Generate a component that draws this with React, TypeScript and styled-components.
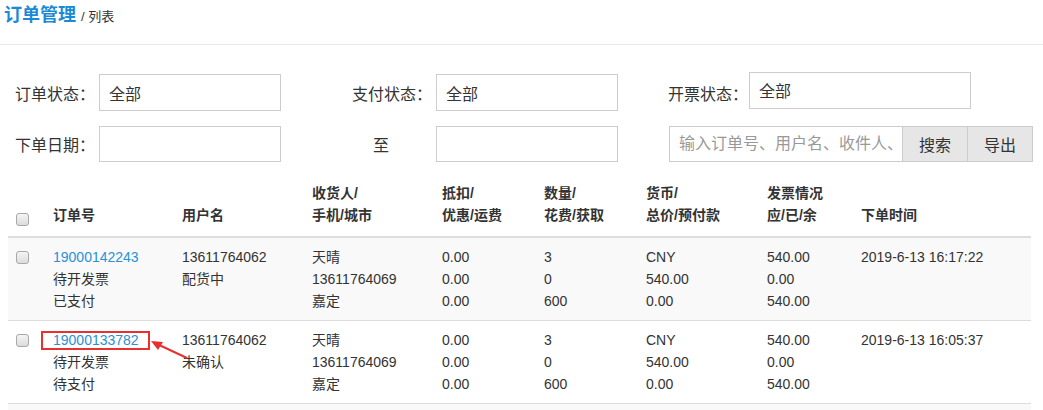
import React from "react";
import styled, { createGlobalStyle } from "styled-components";

const GlobalStyle = createGlobalStyle`
  body {
    margin: 0;
    background: #ffffff;
    color: #333333;
    font-family: "Liberation Sans", "Noto Sans CJK SC", sans-serif;
  }
`;

const Page = styled.div`
  width: 1043px;
  height: 410px;
  overflow: hidden;
`;

const TitleBar = styled.div`
  height: 45px;
  box-sizing: border-box;
  padding: 3px 0 0 4px;
  border-bottom: 1px solid #e9e9e9;
  display: flex;
  align-items: baseline;
  gap: 5px;
`;

const Title = styled.span`
  font-size: 18px;
  font-weight: bold;
  color: #1a8ad6;
  line-height: 24px;
`;

const Crumb = styled.span`
  font-size: 13px;
  color: #333;
`;

const Filters = styled.div`
  padding-top: 29px;
  display: flex;
  flex-direction: column;
  gap: 15px;
`;

const FilterRow = styled.div`
  display: flex;
  align-items: center;
`;

const Label = styled.label<{ $width: number; $pad?: number }>`
  width: ${({ $width }) => $width}px;
  box-sizing: border-box;
  padding-right: ${({ $pad }) => $pad ?? 4}px;
  text-align: right;
  font-size: 16px;
  color: #333;
  white-space: nowrap;
`;

const Field = styled.input<{ $width: number; $height: number; $shift?: number }>`
  width: ${({ $width }) => $width}px;
  height: ${({ $height }) => $height}px;
  box-sizing: border-box;
  border: 1px solid #cccccc;
  padding: 0 9px;
  font-size: 16px;
  font-family: inherit;
  color: #333;
  outline: none;
  margin-top: ${({ $shift }) => $shift ?? 0}px;

  &::placeholder {
    color: #999;
  }
`;

const SearchGroup = styled.div`
  display: flex;
  margin-left: 51px;
  height: 36px;
`;

const ToolButton = styled.button`
  width: 65px;
  height: 36px;
  border: 1px solid #cccccc;
  border-left: none;
  background: #e6e6e6;
  font-size: 16px;
  font-family: inherit;
  color: #333;
  padding: 0;
`;

const Table = styled.table`
  margin: 12px 0 0 8px;
  width: 1023px;
  border-collapse: collapse;
  table-layout: fixed;
  font-size: 14px;
`;

const HeadCell = styled.th`
  text-align: left;
  vertical-align: bottom;
  font-weight: bold;
  line-height: 22px;
  padding: 8px 0 10px 8px;
  border-bottom: 2px solid #dddddd;
`;

const BodyRow = styled.tr<{ $striped?: boolean }>`
  background: ${({ $striped }) => ($striped ? "#f9f9f9" : "#ffffff")};
  border-bottom: 1px solid #dddddd;
`;

const Cell = styled.td`
  vertical-align: top;
  line-height: 22px;
  padding: 8px 0 8px 8px;
  white-space: nowrap;
`;

const OrderCell = styled(Cell)`
  position: relative;
`;

const Check = styled.input.attrs({ type: "checkbox" })`
  appearance: none;
  width: 13px;
  height: 13px;
  margin: 5px 0 0 0;
  border: 1px solid #a9a9a9;
  border-radius: 3px;
  background: linear-gradient(#f4f4f4, #dcdcdc);
  display: block;
`;

const Line = styled.div``;

const OrderLink = styled.a<{ $marked?: boolean }>`
  color: #2a90d8;
  text-decoration: none;
  position: relative;

  &::after {
    content: "";
    display: ${({ $marked }) => ($marked ? "block" : "none")};
    position: absolute;
    left: -12px;
    right: -11px;
    top: -1px;
    bottom: -2px;
    border: 2px solid #e8312f;
  }
`;

const Arrow = styled.svg`
  position: absolute;
  left: 106px;
  top: 20px;
  overflow: visible;
`;

type Order = {
  id: string;
  invoice: string;
  pay: string;
  user: string;
  state: string;
  time: string;
  marked?: boolean;
};

const orders: Order[] = [
  {
    id: "19000142243",
    invoice: "待开发票",
    pay: "已支付",
    user: "13611764062",
    state: "配货中",
    time: "2019-6-13 16:17:22",
  },
  {
    id: "19000133782",
    invoice: "待开发票",
    pay: "待支付",
    user: "13611764062",
    state: "未确认",
    time: "2019-6-13 16:05:37",
    marked: true,
  },
];

const Lines = ({ items }: { items: string[] }) => (
  <>
    {items.map((t, i) => (
      <Line key={i}>{t}</Line>
    ))}
  </>
);

export default function App() {
  return (
    <Page>
      <GlobalStyle />
      <TitleBar>
        <Title>订单管理</Title>
        <Crumb>/ 列表</Crumb>
      </TitleBar>

      <Filters>
        <FilterRow>
          <Label $width={99}>订单状态：</Label>
          <Field $width={182} $height={37} defaultValue="全部" readOnly />
          <Label $width={155}>支付状态：</Label>
          <Field $width={182} $height={37} defaultValue="全部" readOnly />
          <Label $width={131} $pad={1}>开票状态：</Label>
          <Field $width={222} $height={37} $shift={-5} defaultValue="全部" readOnly />
        </FilterRow>
        <FilterRow>
          <Label $width={99}>下单日期：</Label>
          <Field $width={182} $height={36} />
          <Label $width={155} $pad={47}>至</Label>
          <Field $width={182} $height={36} />
          <SearchGroup>
            <Field $width={234} $height={36} placeholder="输入订单号、用户名、收件人、手机" />
            <ToolButton>搜索</ToolButton>
            <ToolButton>导出</ToolButton>
          </SearchGroup>
        </FilterRow>
      </Filters>

      <Table>
        <colgroup>
          <col style={{ width: 37 }} />
          <col style={{ width: 129 }} />
          <col style={{ width: 130 }} />
          <col style={{ width: 130 }} />
          <col style={{ width: 102 }} />
          <col style={{ width: 102 }} />
          <col style={{ width: 121 }} />
          <col style={{ width: 94 }} />
          <col />
        </colgroup>
        <thead>
          <tr>
            <HeadCell>
              <Check />
            </HeadCell>
            <HeadCell>订单号</HeadCell>
            <HeadCell>用户名</HeadCell>
            <HeadCell>
              收货人/
              <br />
              手机/城市
            </HeadCell>
            <HeadCell>
              抵扣/
              <br />
              优惠/运费
            </HeadCell>
            <HeadCell>
              数量/
              <br />
              花费/获取
            </HeadCell>
            <HeadCell>
              货币/
              <br />
              总价/预付款
            </HeadCell>
            <HeadCell>
              发票情况
              <br />
              应/已/余
            </HeadCell>
            <HeadCell>下单时间</HeadCell>
          </tr>
        </thead>
        <tbody>
          {orders.map((o, i) => (
            <BodyRow key={o.id} $striped={i % 2 === 0}>
              <Cell>
                <Check />
              </Cell>
              <OrderCell>
                <Line>
                  <OrderLink href="#" $marked={o.marked}>
                    {o.id}
                  </OrderLink>
                </Line>
                <Line>{o.invoice}</Line>
                <Line>{o.pay}</Line>
                {o.marked && (
                  <Arrow width="40" height="20" viewBox="0 0 40 20">
                    <line x1="36" y1="17" x2="6" y2="3" stroke="#e8312f" strokeWidth="2" />
                    <polygon points="0,0 12,1 7,9" fill="#e8312f" />
                  </Arrow>
                )}
              </OrderCell>
              <Cell>
                <Lines items={[o.user, o.state]} />
              </Cell>
              <Cell>
                <Lines items={["天晴", "13611764069", "嘉定"]} />
              </Cell>
              <Cell>
                <Lines items={["0.00", "0.00", "0.00"]} />
              </Cell>
              <Cell>
                <Lines items={["3", "0", "600"]} />
              </Cell>
              <Cell>
                <Lines items={["CNY", "540.00", "0.00"]} />
              </Cell>
              <Cell>
                <Lines items={["540.00", "0.00", "540.00"]} />
              </Cell>
              <Cell>{o.time}</Cell>
            </BodyRow>
          ))}
          <BodyRow $striped>
            <Cell colSpan={9} />
          </BodyRow>
        </tbody>
      </Table>
    </Page>
  );
}
